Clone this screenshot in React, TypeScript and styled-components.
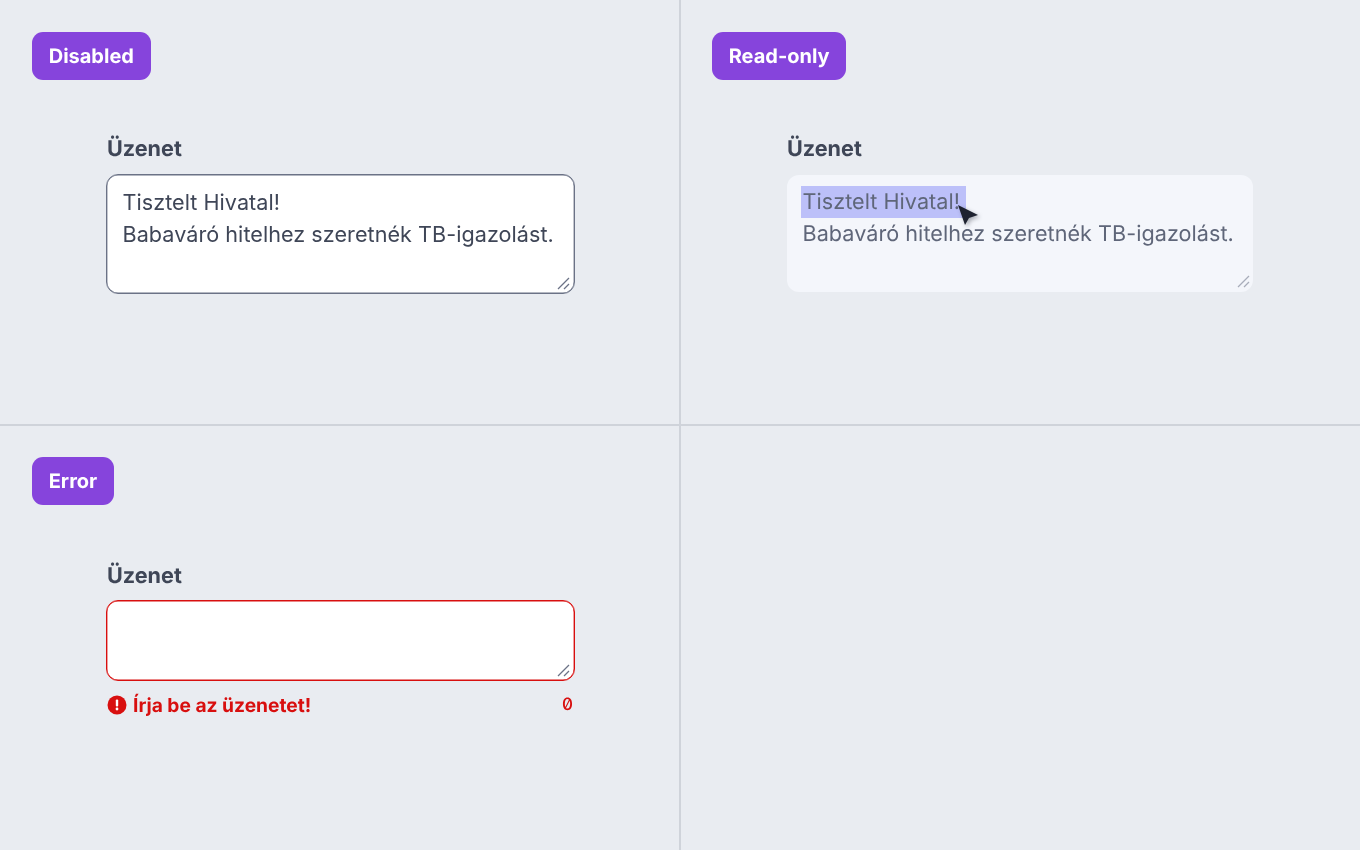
import React from "react";
import styled, { createGlobalStyle } from "styled-components";

const Global = createGlobalStyle`
  html, body { margin: 0; padding: 0; background: #e9ecf1; }
  body { font-family: Inter, "Noto Sans", sans-serif; text-rendering: geometricPrecision; }
`;

const Grid = styled.main`
  display: grid;
  grid-template-columns: 680px 680px;
  grid-template-rows: 425px 425px;
  width: 1360px;
  height: 850px;
  overflow: hidden;
  will-change: transform;
`;

const Cell = styled.section<{ $right?: boolean; $bottom?: boolean }>`
  box-sizing: border-box;
  padding: 32px;
  ${(p) => (p.$right ? "border-right: 2px solid #cfd3da; margin-right: -1px;" : "")}
  ${(p) => (p.$bottom ? "border-bottom: 2px solid #cfd3da; margin-bottom: -1px;" : "")}
`;

const Badge = styled.div`
  display: inline-flex;
  align-items: center;
  height: 48px;
  box-sizing: border-box;
  padding: 0 16.7px;
  border-radius: 11px;
  background: #8644dc;
  color: #fff;
  font-size: 20px;
  font-weight: 650;
  vertical-align: top;
`;

const Field = styled.div<{ $low?: boolean }>`
  width: 467px;
  margin: ${(p) => (p.$low ? "54px" : "52px")} 0 0 75px;
  position: relative;
`;

const Label = styled.label<{ $low?: boolean }>`
  display: block;
  height: 32px;
  margin-bottom: ${(p) => (p.$low ? "9px" : "10px")};
  font-size: 21.6px;
  font-weight: 650;
  line-height: 34px;
  color: #3f4657;
`;

const AreaWrap = styled.div`
  position: relative;
  display: flow-root;
`;

const Area = styled.textarea<{ $invalid?: boolean; $rows: number }>`
  display: block;
  box-sizing: border-box;
  width: 469px;
  height: ${(p) => (p.$rows === 3 ? 120 : 81)}px;
  margin-left: -1px;
  padding: 11px 15.5px;
  border: 1px solid ${(p) => (p.$invalid ? "#d80f0f" : "#6b7286")};
  box-shadow: inset 0 0 0 0.4px ${(p) => (p.$invalid ? "#d80f0f" : "#6b7286")};
  border-radius: 12px;
  background: #fff;
  color: #3f4657;
  font: 400 21.6px/32px Inter, sans-serif;
  letter-spacing: 0.04px;
  outline: none;
  resize: none;
`;

const ReadBox = styled.div`
  box-sizing: border-box;
  width: 466px;
  height: 117px;
  margin-top: 1px;
  padding: 11px 15.5px;
  border-radius: 12px;
  background: #f4f6fb;
  color: #5f6679;
  font: 400 21.6px/32px Inter, sans-serif;
  letter-spacing: 0.04px;
  white-space: pre-wrap;
`;

const Mark = styled.span`
  display: inline-block;
  background: #bcc0f9;
  padding: 0 6px 0 1.5px;
  margin: 0 -6px 0 -1.5px;
`;

const Grip = styled.svg<{ $soft?: boolean; $x: number }>`
  position: absolute;
  right: ${(p) => p.$x}px;
  bottom: 4px;
  opacity: ${(p) => (p.$soft ? 0.55 : 1)};
`;

const CursorMark = styled.svg`
  position: absolute;
  left: 171px;
  top: 73px;
  filter: drop-shadow(2px 2px 2px rgba(30, 35, 50, 0.35));
`;

const Footer = styled.div`
  display: flex;
  align-items: center;
  justify-content: space-between;
  margin-top: 13px;
  color: #d80f0f;
`;

const ErrorText = styled.span`
  display: flex;
  align-items: center;
  gap: 6px;
  font-size: 19.2px;
  font-weight: 700;
  line-height: 22px;
`;

const Counter = styled.span`
  font-family: Inter, sans-serif;
  font-feature-settings: "zero" 1;
  font-size: 17px;
  font-weight: 500;
  line-height: 22px;
  padding-right: 1px;
`;

const ResizeGrip = ({ soft, x }: { soft?: boolean; x: number }) => (
  <Grip $soft={soft} $x={x} width="13" height="13" viewBox="0 0 13 13">
    <path d="M1 12 L12 1 M7 12 L12 7" stroke="#6b7286" strokeWidth="1.3" fill="none" />
  </Grip>
);

const disabledText = "Tisztelt Hivatal!\nBabaváró hitelhez szeretnék TB-igazolást.";

export default function App() {
  return (
    <Grid>
      <Global />
      <Cell $right $bottom>
        <Badge>Disabled</Badge>
        <Field>
          <Label>Üzenet</Label>
          <AreaWrap>
            <Area $rows={3} defaultValue={disabledText} />
            <ResizeGrip x={4} />
          </AreaWrap>
        </Field>
      </Cell>
      <Cell $bottom>
        <Badge>Read-only</Badge>
        <Field>
          <Label>Üzenet</Label>
          <AreaWrap>
            <ReadBox>
              <Mark>Tisztelt Hivatal!</Mark>
              {"\nBabaváró hitelhez szeretnék TB-igazolást."}
            </ReadBox>
            <ResizeGrip soft x={4} />
          </AreaWrap>
          <CursorMark width="24" height="24" viewBox="0 0 24 24">
            <path d="M0 0 L20 10 L11 13 L7 20 Z" fill="#1e2230" />
          </CursorMark>
        </Field>
      </Cell>
      <Cell $right>
        <Badge>Error</Badge>
        <Field $low>
          <Label $low>Üzenet</Label>
          <AreaWrap>
            <Area $rows={2} $invalid />
            <ResizeGrip x={4} />
          </AreaWrap>
          <Footer>
            <ErrorText>
              <svg width="20" height="20" viewBox="0 0 20 20">
                <circle cx="10" cy="10" r="9.5" fill="#d80f0f" />
                <rect x="8.8" y="4.5" width="2.4" height="7" rx="1" fill="#fff" />
                <circle cx="10" cy="14" r="1.4" fill="#fff" />
              </svg>
              Írja be az üzenetet!
            </ErrorText>
            <Counter>0</Counter>
          </Footer>
        </Field>
      </Cell>
      <Cell />
    </Grid>
  );
}
